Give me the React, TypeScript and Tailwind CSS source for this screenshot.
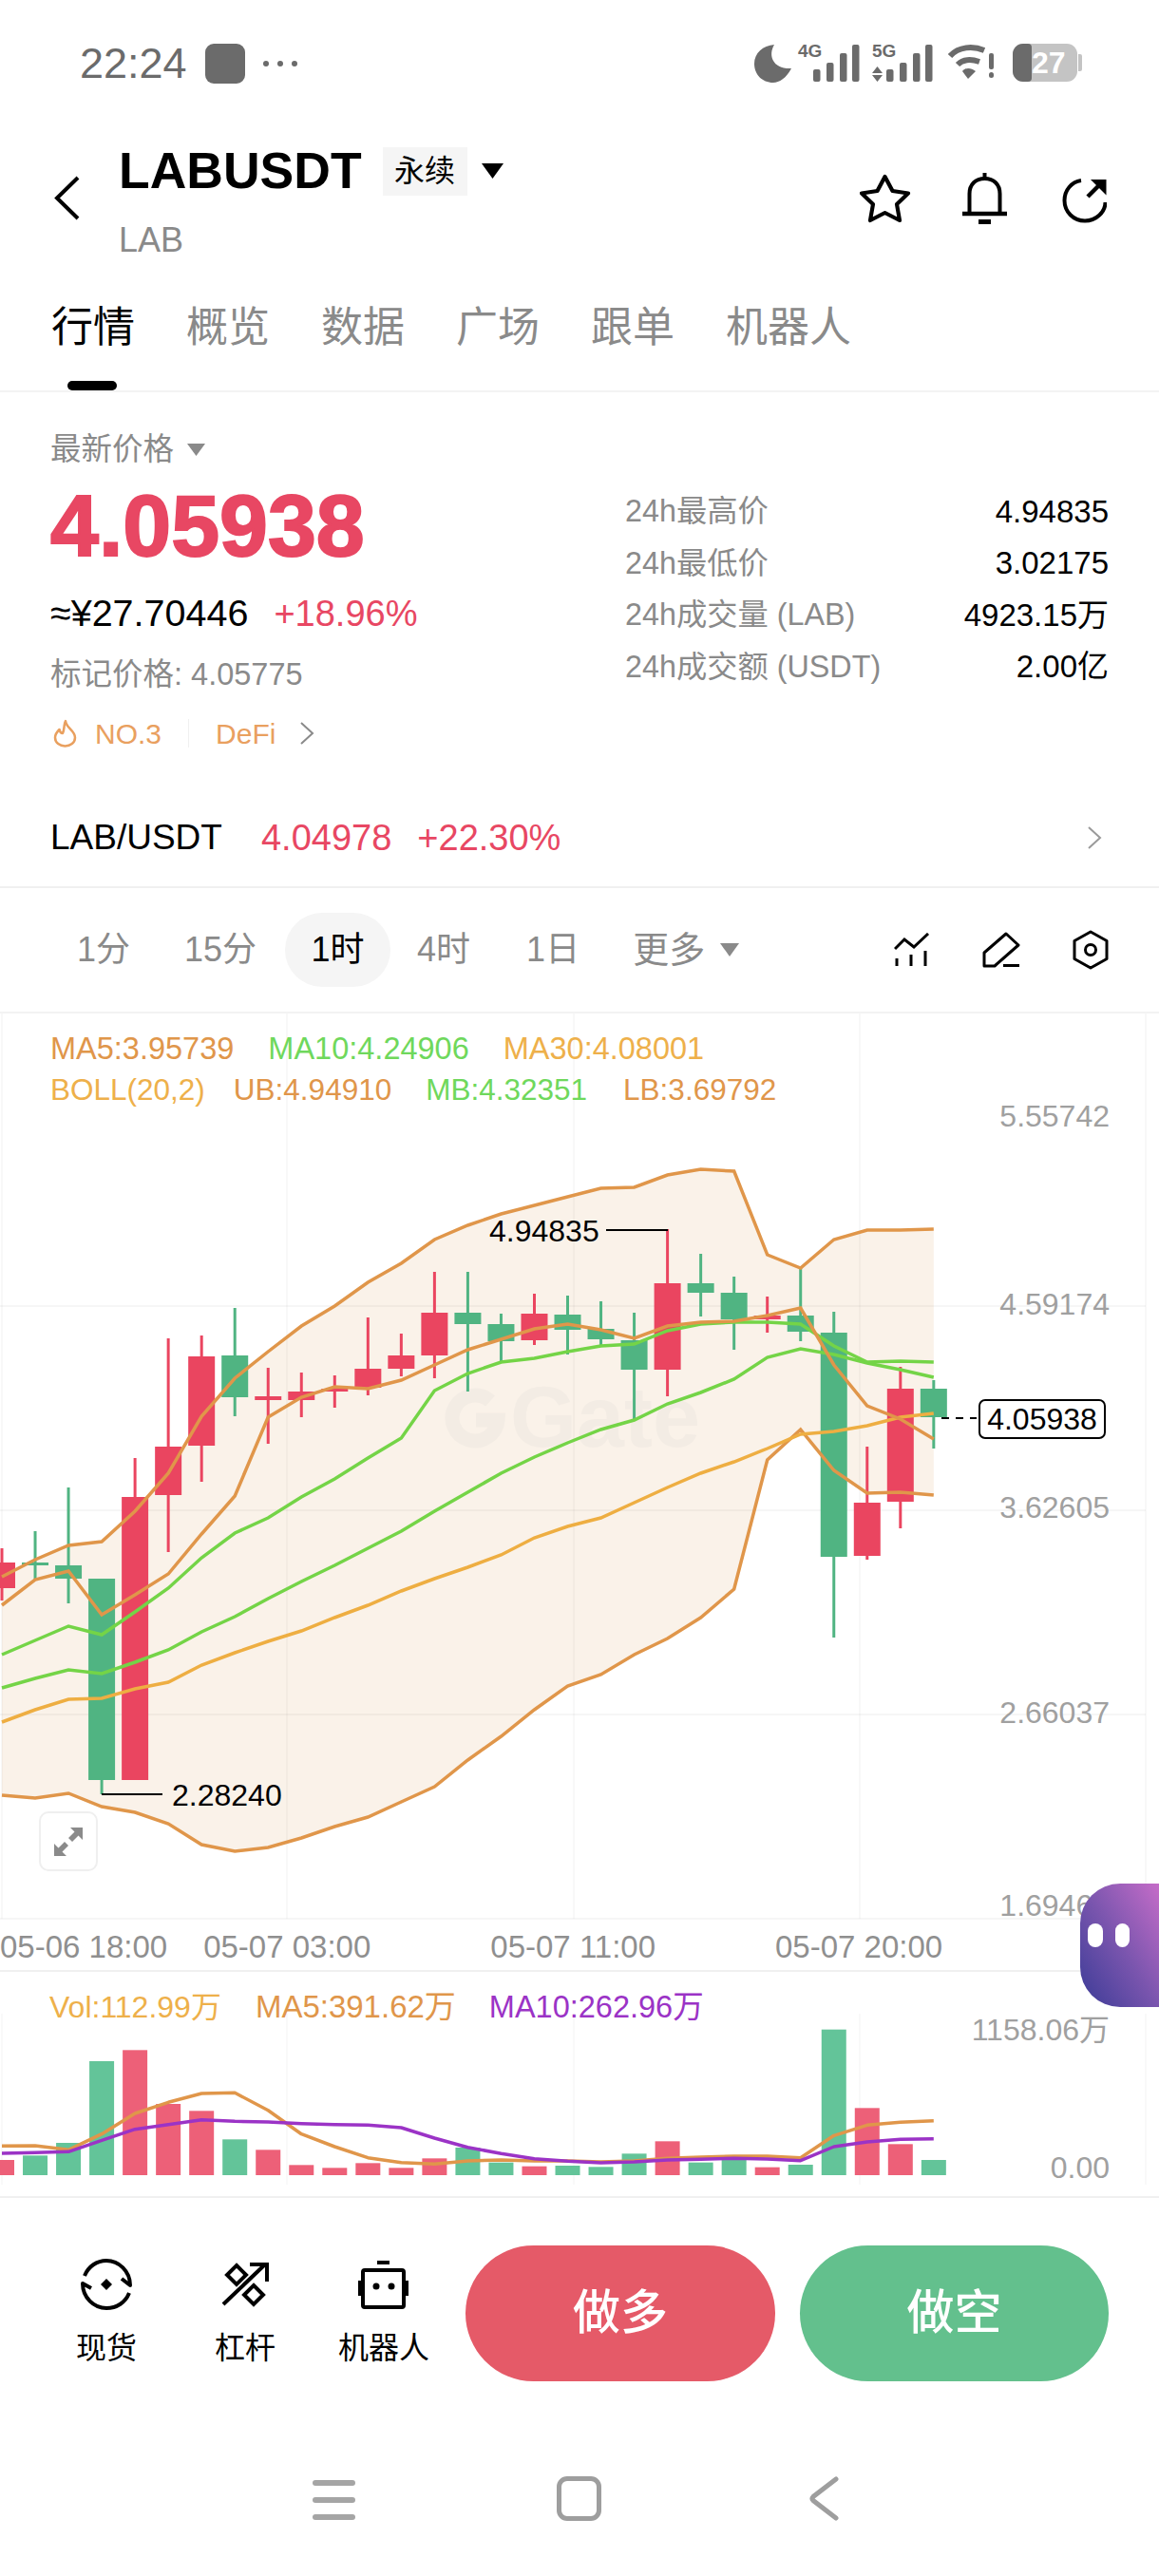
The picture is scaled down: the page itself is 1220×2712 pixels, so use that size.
import React from "react";

const UB = [1660,1642,1627,1623,1591,1551,1491,1451,1423,1396,1375,1350,1330,1305,1290,1278,1269,1260,1251,1250,1237,1231,1233,1321,1335,1305,1295,1295,1294];
const LB = [1890,1893,1888,1902,1908,1920,1942,1949,1945,1935,1923,1913,1897,1881,1853,1828,1800,1775,1763,1742,1725,1703,1673,1537,1505,1548,1572,1571,1574];
const MA5 = [1690,1663,1654,1700,1679,1657,1615,1575,1492,1471,1460,1462,1453,1437,1421,1410,1399,1394,1400,1409,1396,1392,1391,1385,1377,1437,1480,1494,1515];
const MA10 = [1742,1727,1712,1721,1697,1672,1640,1614,1598,1576,1557,1535,1514,1464,1446,1434,1430,1423,1417,1415,1401,1394,1392,1392,1394,1417,1434,1433,1434];
const MB = [1777,1767,1758,1762,1750,1737,1718,1702,1683,1665,1648,1630,1612,1591,1571,1551,1534,1519,1505,1495,1478,1466,1452,1429,1420,1426,1435,1442,1450];
const MA30 = [1813,1800,1789,1788,1778,1771,1753,1740,1728,1717,1703,1690,1675,1662,1650,1637,1619,1607,1598,1582,1566,1551,1539,1525,1510,1507,1501,1492,1488];
// [up?, wickTop, bodyTop, bodyBottom, wickBottom]
const C: [number, number, number, number, number][] = [
  [1,1630,1645,1672,1685],[0,1612,1645,1648,1663],[0,1566,1648,1662,1688],[0,1662,1662,1874,1889],
  [1,1535,1576,1874,1874],[1,1409,1523,1574,1634],[1,1406,1428,1522,1560],[0,1377,1427,1471,1491],
  [1,1440,1470,1474,1520],[1,1445,1465,1474,1492],[1,1448,1462,1465,1482],[1,1387,1441,1461,1469],
  [1,1404,1427,1441,1449],[1,1339,1382,1427,1451],[0,1339,1382,1394,1465],[0,1383,1394,1412,1434],
  [1,1362,1383,1411,1416],[0,1364,1384,1400,1426],[0,1370,1399,1410,1417],[0,1382,1411,1442,1494],
  [1,1294,1351,1442,1470],[0,1320,1351,1361,1386],[0,1344,1361,1389,1421],[1,1365,1385,1389,1403],
  [0,1335,1385,1402,1412],[0,1381,1403,1639,1724],[1,1523,1582,1638,1642],[1,1439,1462,1581,1609],
  [0,1453,1462,1492,1525],
];
const VT = [702,688,648,390,355,525,547,637,670,718,727,712,727,697,663,710,722,720,724,682,643,710,700,725,717,290,538,652,702];
const VUP = [1,0,0,0,1,1,1,0,1,1,1,1,1,1,0,0,1,0,0,0,1,0,0,1,0,0,1,1,0];
const VM5 = [658,657,670,620,555,520,492,490,545,620,660,695,710,715,705,702,705,705,708,705,697,693,690,690,695,625,592,583,578];
const VM10 = [681,679,676,640,605,590,575,580,582,587,590,592,600,633,662,682,698,706,711,708,702,700,697,699,704,660,645,637,635];

const X = (i: number) => 2 + 35.03 * i;
const pts = (a: number[]) => a.map((y, i) => `${X(i).toFixed(1)},${y}`).join(" ");
const vy = (v: number) => v / 3 + 2040;
const vpts = (a: number[]) => a.map((y, i) => `${X(i).toFixed(1)},${vy(y).toFixed(1)}`).join(" ");

function Caret({ w, h, c }: { w: number; h: number; c: string }) {
  return (
    <svg width={w} height={h} viewBox="0 0 20 14" preserveAspectRatio="none">
      <path d="M0 0H20L10 14Z" fill={c} />
    </svg>
  );
}

function Chevron({ w, h, c, sw }: { w: number; h: number; c: string; sw: number }) {
  return (
    <svg width={w} height={h} viewBox={`0 0 ${w} ${h}`} fill="none">
      <path d={`M${sw} ${sw}L${w - sw} ${h / 2}L${sw} ${h - sw}`} stroke={c} strokeWidth={sw} />
    </svg>
  );
}

function Signal({ label, arrows, w }: { label: string; arrows?: boolean; w: number }) {
  const off = w - 49;
  return (
    <div className="relative h-[42px]">
      <svg className="block" width={w} height={42} viewBox={`0 0 ${w} 42`}>
        {arrows && <path d="M0 31L5.500 24L11 31ZM0 33H11L5.500 40Z" fill="#6b6b6b" />}
        <rect x={off} y={27} width={7.500} height={13} rx={2} fill="#6b6b6b" />
        <rect x={off + 14} y={20} width={7.500} height={20} rx={2} fill="#6b6b6b" />
        <rect x={off + 28} y={10} width={7.500} height={30} rx={2} fill="#6b6b6b" />
        <rect x={off + 41} y={1} width={7.500} height={39} rx={2} fill="#6b6b6b" />
      </svg>
      <span className="absolute left-0 top-0 text-[19px] font-bold leading-[15px] text-[#6b6b6b]">{label}</span>
    </div>
  );
}

function StatusBar() {
  return (
    <div className="flex h-[150px] items-start pt-[46px] text-[#6b6b6b]">
      <div className="ml-[84px] text-[45px] leading-[42px]">22:24</div>
      <div className="ml-[19px] h-[42px] w-[42px] rounded-[9px] bg-[#6b6b6b]" />
      <div className="ml-[19px] mt-[18px] flex gap-[9px]">
        <div className="h-[6px] w-[6px] rounded-full bg-[#6b6b6b]" />
        <div className="h-[6px] w-[6px] rounded-full bg-[#6b6b6b]" />
        <div className="h-[6px] w-[6px] rounded-full bg-[#6b6b6b]" />
      </div>
      <div className="ml-auto mr-[81px] flex items-start">
        <svg width={40} height={42} viewBox="0 0 40 42">
          <path d="M21 1C14 13 20 27 39 26C34 36 26 41 20 41C8 41 0 32 0 21C0 10 9 2 21 1Z" fill="#6b6b6b" />
        </svg>
        <div className="ml-[6px]"><Signal label="4G" w={65} /></div>
        <div className="ml-[13px]"><Signal label="5G" arrows w={64} /></div>
        <svg className="ml-[16px]" width={50} height={40} viewBox="0 0 50 40" fill="none">
          <path d="M2 13C11 3 26 2 38 7" stroke="#6b6b6b" strokeWidth={6} />
          <path d="M10 22C16 16 24 16 33 19" stroke="#6b6b6b" strokeWidth={6} />
          <path d="M15 29C18 25 24 25 29 29L21 37Z" fill="#6b6b6b" />
          <rect x={43} y={10} width={5} height={17} rx={2} fill="#6b6b6b" />
          <rect x={43} y={30} width={5} height={6} rx={2.500} fill="#6b6b6b" />
        </svg>
        <div className="relative ml-[18px] flex h-[40px] w-[68px] items-center overflow-hidden rounded-[11px] bg-[#c4c4c4]">
          <div className="h-full w-[20px] rounded-r-[4px] bg-[#6b6b6b]" />
          <div className="absolute left-[20px] top-0 text-[32px] font-bold leading-[40px] text-white">27</div>
        </div>
        <div className="ml-[1px] mt-[11px] h-[18px] w-[4px] rounded-r-[2px] bg-[#c4c4c4]" />
      </div>
    </div>
  );
}

function Header() {
  return (
    <div className="flex h-[130px] items-start">
      <svg className="ml-[57px] mt-[35px]" width={27} height={47} viewBox="0 0 27 47" fill="none">
        <path d="M25 2L3 23.5L25 45" stroke="#000" strokeWidth={4} />
      </svg>
      <div className="ml-[41px] flex flex-col">
        <div className="flex h-[60px] items-center">
          <div className="text-[53.500px] font-bold leading-[60px] text-black">LABUSDT</div>
          <div className="ml-[22px] flex h-[51px] w-[89px] items-center justify-center bg-[#f5f5f5] text-[32px] text-black">永续</div>
          <div className="ml-[15px]"><Caret w={23} h={16} c="#000" /></div>
        </div>
        <div className="mt-[23px] text-[36px] leading-[40px] text-[#8a8a8a]">LAB</div>
      </div>
      <div className="ml-auto mr-[55px] mt-[33px] flex items-start">
        <svg width={54} height={52} viewBox="0 0 54 52" fill="none">
          <path d="M26.500 3L34.500 18L51 20.500L39 32L42 49L26.500 41L11 49L14 32L2 20.500L18.500 18Z" stroke="#000" strokeWidth={4.200} strokeLinejoin="round" />
        </svg>
        <svg className="-mt-[1px] ml-[54px]" width={47} height={55} viewBox="0 0 47 55" fill="none">
          <path d="M23.500 0V6" stroke="#000" strokeWidth={4} />
          <path d="M7.500 42V22C7.500 12 14 6 23.500 6C33 6 39.500 12 39.500 22V42" stroke="#000" strokeWidth={4} />
          <path d="M0 43H47" stroke="#000" strokeWidth={4.500} />
          <path d="M17 51.500H30" stroke="#000" strokeWidth={5} />
        </svg>
        <svg className="ml-[58px] mt-[4px]" width={47} height={48} viewBox="0 0 47 48" fill="none">
          <path d="M20 3C10 4.500 2.500 13 2.500 24C2.500 36 12 45.500 24 45.500C36 45.500 45.500 36 45.500 26" stroke="#000" strokeWidth={4} />
          <path d="M27 20L40 7" stroke="#000" strokeWidth={4.500} />
          <path d="M30 2H46.500V18.500Z" fill="#000" />
        </svg>
      </div>
    </div>
  );
}

function Tabs() {
  return (
    <div className="relative flex h-[133px] gap-[54px] border-b-2 border-[#f3f3f3] pl-[54px] pt-[40px] text-[44px] leading-[50px] text-[#8a8a8a]">
      <div className="text-black">行情</div>
      <div>概览</div>
      <div>数据</div>
      <div>广场</div>
      <div>跟单</div>
      <div>机器人</div>
      <div className="absolute bottom-0 left-[71px] h-[10px] w-[52px] rounded-full bg-black" />
    </div>
  );
}

function StatRow({ k, v }: { k: string; v: string }) {
  return (
    <div className="flex h-[54.500px] items-center justify-between">
      <span className="text-[32.300px] text-[#8a8a8a]">{k}</span>
      <span className="text-black">{v}</span>
    </div>
  );
}

function Stats() {
  return (
    <div className="flex h-[444px]">
      <div className="flex w-[658px] flex-col pl-[53px] pt-[40px]">
        <div className="flex h-[40px] items-center text-[32.500px] text-[#8a8a8a]">
          最新价格
          <div className="ml-[14px]"><Caret w={19} h={13} c="#8a8a8a" /></div>
        </div>
        <div className="mt-[10px] text-[91.500px] font-bold leading-[100px] text-[#e84763] [-webkit-text-stroke:2px_#e84763]">4.05938</div>
        <div className="mt-[18px] flex h-[50px] items-center text-[38px]">
          <span className="text-[39.500px] text-black">≈¥27.70446</span>
          <span className="ml-[27px] text-[#e84763]">+18.96%</span>
        </div>
        <div className="mt-[19px] h-[40px] text-[32.500px] leading-[40px] text-[#8a8a8a]">标记价格: 4.05775</div>
        <div className="mt-[22px] flex h-[40px] items-center text-[30px] text-[#e9a05f]">
          <svg className="ml-[3px]" width={25} height={30} viewBox="0 0 25 30" fill="none">
            <path d="M13 2C13 9 23 12 23 19.500C23 25 18 28.500 12.500 28.500C7 28.500 2 25 2 19.500C2 15.500 4.500 13 6.500 11C7 14 8.500 15 10 15C12 11 11 6 13 2Z" stroke="#e9a05f" strokeWidth={2.500} strokeLinejoin="round" />
          </svg>
          <span className="ml-[19px]">NO.3</span>
          <div className="ml-[28px] h-[30px] w-[1px] bg-[#f0f0f0]" />
          <span className="ml-[28px]">DeFi</span>
          <div className="ml-[25px]"><Chevron w={16} h={26} c="#8a8a8a" sw={2} /></div>
        </div>
      </div>
      <div className="mt-[98px] flex w-[509px] flex-col text-[33px]">
        <StatRow k="24h最高价" v="4.94835" />
        <StatRow k="24h最低价" v="3.02175" />
        <StatRow k="24h成交量 (LAB)" v="4923.15万" />
        <StatRow k="24h成交额 (USDT)" v="2.00亿" />
      </div>
    </div>
  );
}

function SpotRow() {
  return (
    <div className="flex h-[78px] items-start border-b-2 border-[#f0f0f0] pl-[53px] pr-[60px] text-[38px] leading-[50px]">
      <span className="text-[37px] text-black">LAB/USDT</span>
      <span className="ml-[41px] text-[#e84763]">4.04978</span>
      <span className="ml-[27px] text-[#e84763]">+22.30%</span>
      <div className="ml-auto mt-[12px]"><Chevron w={16} h={26} c="#9a9a9a" sw={2} /></div>
    </div>
  );
}

function Intervals() {
  return (
    <div className="flex h-[132px] items-center border-b-2 border-[#f3f3f3] text-[36px] text-[#8a8a8a]">
      <span className="ml-[81px]">1分</span>
      <span className="ml-[57px]">15分</span>
      <div className="ml-[30px] flex h-[78px] w-[111px] items-center justify-center rounded-full bg-[#f5f5f5] text-black">1时</div>
      <span className="ml-[28px]">4时</span>
      <span className="ml-[59px]">1日</span>
      <span className="ml-[56px] text-[38px]">更多</span>
      <div className="ml-[16px]"><Caret w={20} h={14} c="#8a8a8a" /></div>
      <svg className="ml-[163px]" width={38} height={36} viewBox="0 0 38 36" fill="none">
        <path d="M1 17L11 7L21 15L36 1" stroke="#000" strokeWidth={3} />
        <path d="M3 27V35M18 23V35M33 19V35" stroke="#000" strokeWidth={3} />
      </svg>
      <svg className="ml-[55px]" width={40} height={38} viewBox="0 0 40 38" fill="none">
        <path d="M2 22L25 2L38 14L13 36H2Z" stroke="#000" strokeWidth={3} strokeLinejoin="round" />
        <path d="M22 35.500H39" stroke="#000" strokeWidth={3} />
      </svg>
      <svg className="ml-[55px]" width={38} height={42} viewBox="0 0 38 42" fill="none">
        <path d="M19 2L36 11.500V30.500L19 40L2 30.500V11.500Z" stroke="#000" strokeWidth={3} strokeLinejoin="round" />
        <circle cx={19} cy={21} r={5.500} stroke="#000" strokeWidth={3} />
      </svg>
    </div>
  );
}

function Chart() {
  return (
    <div className="relative h-[954px]">
      <svg className="block" width={1220} height={954} viewBox="0 1067 1220 954" fill="none">
        <polygon points={`${pts(UB)} ${LB.map((y, i) => `${X(i).toFixed(1)},${y}`).reverse().join(" ")}`} fill="#faf2e9" />
        {[2, 302, 604, 905, 1206].map((x) => (
          <line key={x} x1={x} x2={x} y1={1067} y2={2020} stroke="#000" strokeOpacity={0.04} strokeWidth={1.500} />
        ))}
        {[1375, 1590, 1805, 2020].map((y) => (
          <line key={y} x1={0} x2={1206} y1={y} y2={y} stroke="#000" strokeOpacity={0.05} strokeWidth={1.500} />
        ))}
        <path d="M516 1475A24 24 0 1 0 524 1495H501" stroke="#f3ece4" strokeWidth={15} />
        <text x={537} y={1523} fontSize={90} fontWeight={700} fill="#f3ece4" fontFamily="Liberation Sans">Gate</text>
        {C.map(([u, wt, bt, bb, wb], i) => {
          const col = u ? "#ea4560" : "#50b482";
          return (
            <g key={i}>
              <line x1={X(i)} x2={X(i)} y1={wt} y2={wb} stroke={col} strokeWidth={3} />
              <rect x={X(i) - 14} y={bt} width={28} height={bb - bt} fill={col} />
            </g>
          );
        })}
        <polyline points={pts(UB)} stroke="#e0964a" strokeWidth={3.500} />
        <polyline points={pts(LB)} stroke="#e0964a" strokeWidth={3.500} />
        <polyline points={pts(MB)} stroke="#74d447" strokeWidth={3.500} />
        <polyline points={pts(MA10)} stroke="#74d447" strokeWidth={3.500} />
        <polyline points={pts(MA30)} stroke="#eeae42" strokeWidth={3.500} />
        <polyline points={pts(MA5)} stroke="#e0964a" strokeWidth={3.500} />
        <path d="M638 1295H703" stroke="#000" strokeWidth={2} />
        <path d="M107 1889H171" stroke="#000" strokeWidth={2} />
        <path d="M991 1493H1028" stroke="#000" strokeWidth={2} strokeDasharray="8 7" />
      </svg>

      <div className="absolute left-[53px] top-[16px] flex flex-col leading-[43px]">
        <div className="flex text-[32.500px]">
          <span className="text-[#e0964a]">MA5:3.95739</span>
          <span className="ml-[36px] text-[#6fd85c]">MA10:4.24906</span>
          <span className="ml-[36px] text-[#eeb04a]">MA30:4.08001</span>
        </div>
        <div className="flex text-[31.500px]">
          <span className="text-[#eeb04a]">BOLL(20,2)</span>
          <span className="ml-[30px] text-[#e0964a]">UB:4.94910</span>
          <span className="ml-[36px] text-[#6fd85c]">MB:4.32351</span>
          <span className="ml-[38px] text-[#e0964a]">LB:3.69792</span>
        </div>
      </div>

      <div className="absolute right-[52px] top-[88px] text-[32px] leading-[40px] text-[#a0a0a0]">5.55742</div>
      <div className="absolute right-[52px] top-[286px] text-[32px] leading-[40px] text-[#a0a0a0]">4.59174</div>
      <div className="absolute right-[52px] top-[500px] text-[32px] leading-[40px] text-[#a0a0a0]">3.62605</div>
      <div className="absolute right-[52px] top-[716px] text-[32px] leading-[40px] text-[#a0a0a0]">2.66037</div>
      <div className="absolute right-[52px] top-[919px] text-[32px] leading-[40px] text-[#a0a0a0]">1.69468</div>

      <div className="absolute left-[515px] top-[209px] text-[32px] leading-[40px] text-black">4.94835</div>
      <div className="absolute left-[181px] top-[803px] text-[32px] leading-[40px] text-black">2.28240</div>
      <div className="absolute left-[1030px] top-[406px] flex h-[42px] w-[134px] items-center justify-center rounded-[7px] border-2 border-black bg-white text-[32px] text-black">4.05938</div>

      <div className="absolute left-[41px] top-[840px] flex h-[63px] w-[62px] items-center justify-center rounded-[10px] border-2 border-[#efefef] bg-white">
        <svg width={32} height={32} viewBox="0 0 32 32">
          <path d="M18 1H31V14L26.500 9.500L20 16L16 12L22.500 5.500Z" fill="#8a8a8a" />
          <path d="M14 31H1V18L5.500 22.500L12 16L16 20L9.500 26.500Z" fill="#8a8a8a" />
        </svg>
      </div>
    </div>
  );
}

function TimeAxis() {
  return (
    <div className="flex h-[55px] items-center border-b-2 border-[#f0f0f0] pt-[4px] text-[33px] text-[#8f8f8f]">
      <span>05-06 18:00</span>
      <span className="ml-[38px]">05-07 03:00</span>
      <span className="ml-[126px]">05-07 11:00</span>
      <span className="ml-[126px]">05-07 20:00</span>
    </div>
  );
}

function Volume() {
  return (
    <div className="relative h-[238px] border-b-2 border-[#f0f0f0]">
      <svg className="absolute left-0 top-0" width={1220} height={236} viewBox="0 2076 1220 236" fill="none">
        {[2, 302, 604, 905, 1206].map((x) => (
          <line key={x} x1={x} x2={x} y1={2120} y2={2300} stroke="#000" strokeOpacity={0.03} strokeWidth={1.500} />
        ))}
        {VT.map((t, i) => (
          <rect key={i} x={X(i) - 13} y={vy(t)} width={26} height={2290 - vy(t)} fill={VUP[i] ? "#ed6078" : "#63c499"} />
        ))}
        <polyline points={vpts(VM5)} stroke="#e0964a" strokeWidth={3.500} strokeLinejoin="round" />
        <polyline points={vpts(VM10)} stroke="#9b33c6" strokeWidth={3.500} strokeLinejoin="round" />
      </svg>
      <div className="relative flex pl-[52px] pt-[17px] text-[32px] leading-[40px]">
        <span className="text-[#eeb04a]">Vol:112.99万</span>
        <span className="ml-[36px] text-[33px] text-[#e0964a]">MA5:391.62万</span>
        <span className="ml-[35px] text-[32.500px] text-[#9b33c6]">MA10:262.96万</span>
      </div>
      <div className="absolute right-[52px] top-[41px] text-[32px] leading-[40px] text-[#a0a0a0]">1158.06万</div>
      <div className="absolute right-[52px] top-[186px] text-[32px] leading-[40px] text-[#a0a0a0]">0.00</div>
    </div>
  );
}

function ActionItem({ icon, label }: { icon: React.ReactNode; label: string }) {
  return (
    <div className="flex w-[146px] flex-col items-center pt-[13px]">
      <div className="flex h-[56px] items-center justify-center">{icon}</div>
      <div className="mt-[24px] text-[32px] leading-[30px] text-black">{label}</div>
    </div>
  );
}

function Actions() {
  return (
    <div className="flex pl-[39px] pt-[50px]">
      <ActionItem
        label="现货"
        icon={
          <svg width={56} height={56} viewBox="0 0 56 56" fill="none">
            <path d="M5 19C9 9 18 3 28 3C41 3 53 14 53 29L44 22" stroke="#000" strokeWidth={4} strokeLinejoin="round" />
            <path d="M52 37C48 47 39 53 28 53C15 53 3 42 3 27L12 32" stroke="#000" strokeWidth={4} strokeLinejoin="round" />
            <path d="M28 22L34 28L28 34L22 28Z" fill="#000" />
          </svg>
        }
      />
      <ActionItem
        label="杠杆"
        icon={
          <svg width={50} height={48} viewBox="0 0 50 48" fill="none">
            <path d="M2 45L46 3" stroke="#000" strokeWidth={4} />
            <path d="M30 3H48V21" stroke="#000" strokeWidth={4} />
            <path d="M16 4L26 14L16 24L6 14Z" stroke="#000" strokeWidth={4} />
            <path d="M34 25L44 35L34 45L24 35Z" stroke="#000" strokeWidth={4} />
          </svg>
        }
      />
      <ActionItem
        label="机器人"
        icon={
          <svg width={54} height={52} viewBox="0 0 54 52" fill="none">
            <rect x={20} y={1} width={13} height={4} fill="#000" />
            <rect x={5} y={11} width={43} height={39} rx={2} stroke="#000" strokeWidth={4} />
            <rect x={0} y={22} width={4} height={16} fill="#000" />
            <rect x={49} y={22} width={4} height={16} fill="#000" />
            <circle cx={19} cy={28} r={3.500} fill="#000" />
            <circle cx={35} cy={28} r={3.500} fill="#000" />
          </svg>
        }
      />
      <div className="ml-[13px] flex h-[143px] w-[326px] items-center justify-center rounded-full bg-[#e55a68] text-[50px] font-medium text-white">做多</div>
      <div className="ml-[26px] flex h-[143px] w-[325px] items-center justify-center rounded-full bg-[#63c08d] text-[50px] font-medium text-white">做空</div>
    </div>
  );
}

function NavBar() {
  return (
    <div className="mt-[100px] flex items-start">
      <div className="ml-[329px] mt-[4px] flex h-[42px] w-[45px] flex-col justify-between">
        <div className="h-[6px] rounded-full bg-[#a5a5a5]" />
        <div className="h-[6px] rounded-full bg-[#a5a5a5]" />
        <div className="h-[6px] rounded-full bg-[#a5a5a5]" />
      </div>
      <div className="ml-[212px] h-[47px] w-[47px] rounded-[11px] border-[5px] border-[#9e9e9e]" />
      <svg className="ml-[219px]" width={31} height={47} viewBox="0 0 31 47" fill="none">
        <path d="M28 3L4 21.500Q2 23.500 4 25.500L28 44" stroke="#9e9e9e" strokeWidth={5} strokeLinecap="round" />
      </svg>
    </div>
  );
}

export default function App() {
  return (
    <div className="relative h-[2712px] w-[1220px] overflow-hidden bg-white font-['Liberation_Sans','Noto_Sans_CJK_SC',sans-serif]">
      <StatusBar />
      <Header />
      <Tabs />
      <Stats />
      <SpotRow />
      <Intervals />
      <Chart />
      <TimeAxis />
      <Volume />
      <Actions />
      <NavBar />
      <div className="absolute left-[1137px] top-[1983px] h-[130px] w-[83px] rounded-l-[42px] bg-linear-to-bl from-[#c56cc8] via-[#7a55ae] to-[#3a3a96]">
        <div className="absolute left-[8px] top-[42px] h-[25px] w-[16px] rounded-full bg-white" />
        <div className="absolute left-[37px] top-[42px] h-[25px] w-[15px] rounded-full bg-white" />
      </div>
    </div>
  );
}
